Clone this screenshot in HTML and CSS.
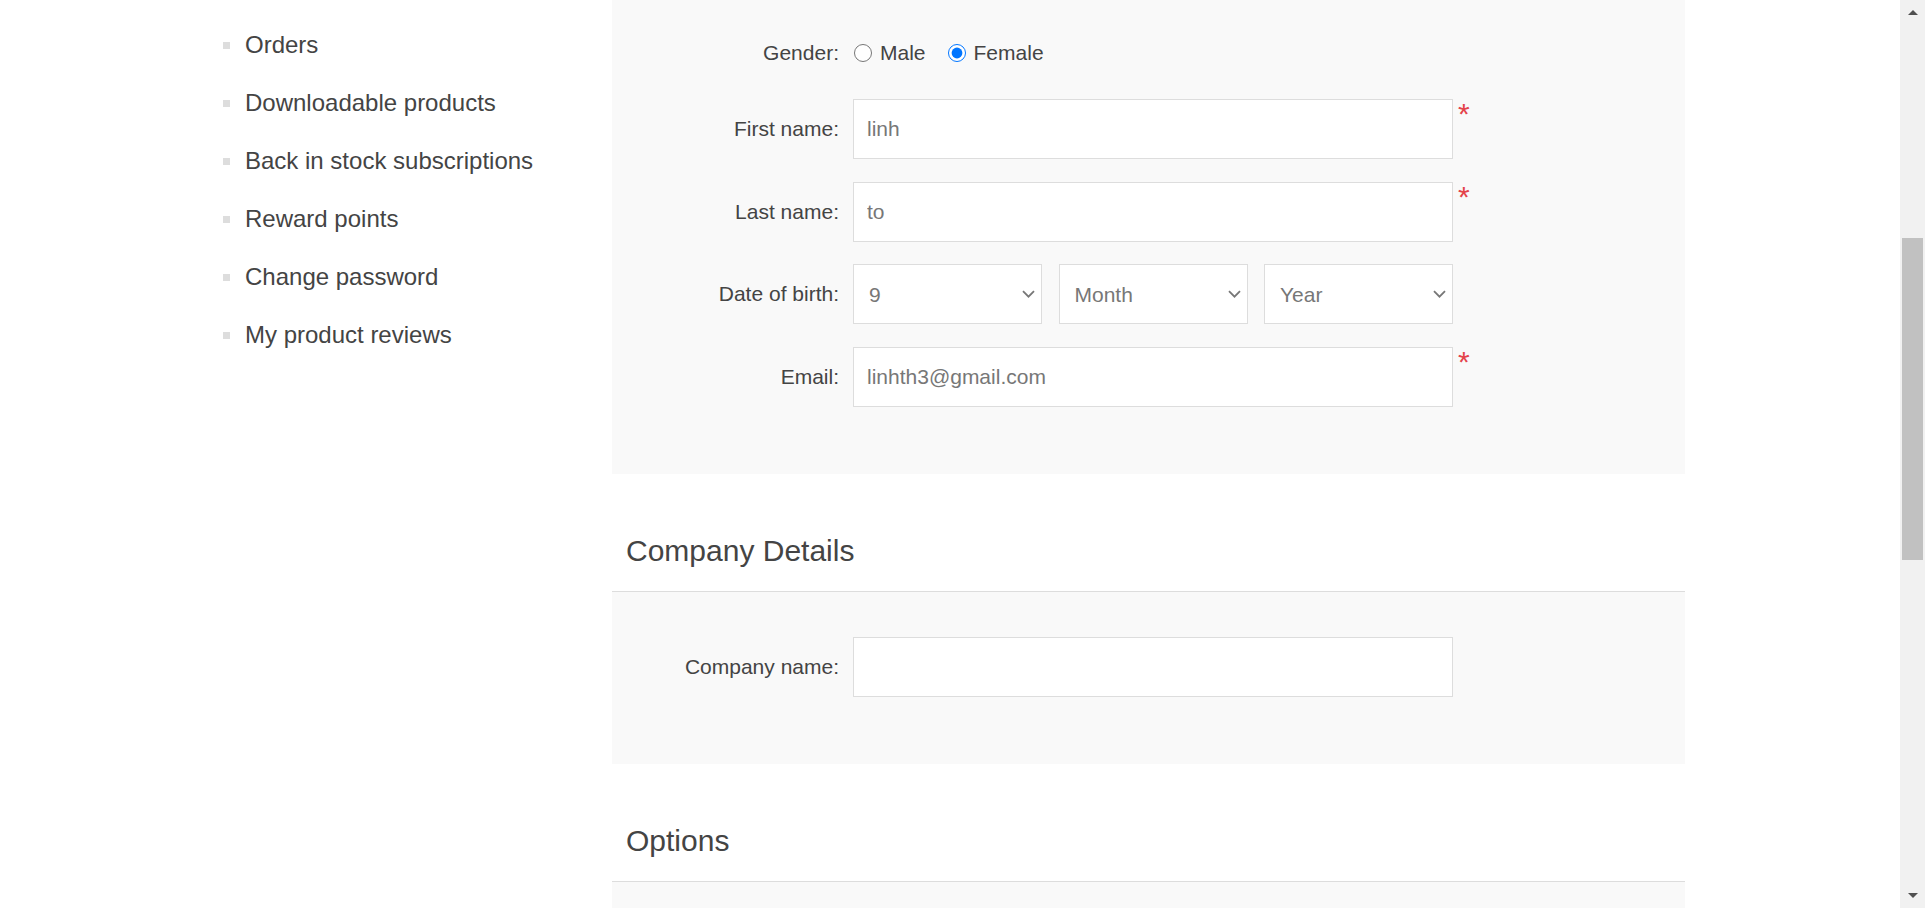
FILE: index.html
```html
<!DOCTYPE html>
<html lang="en">
<head>
<meta charset="utf-8">
<title>Customer info</title>
<link rel="stylesheet" href="styles.css">
</head>
<body>
<div class="viewport">
  <div class="page">
    <div class="container">
      <aside class="side">
        <ul class="nav-list">
          <li><span class="bullet"></span><a href="#">Orders</a></li>
          <li><span class="bullet"></span><a href="#">Downloadable products</a></li>
          <li><span class="bullet"></span><a href="#">Back in stock subscriptions</a></li>
          <li><span class="bullet"></span><a href="#">Reward points</a></li>
          <li><span class="bullet"></span><a href="#">Change password</a></li>
          <li><span class="bullet"></span><a href="#">My product reviews</a></li>
        </ul>
      </aside>
      <main class="main">
        <div class="panel panel-first">
          <div class="row gender-row">
            <label class="lbl">Gender:</label>
            <div class="radios">
              <label class="radio-opt"><input class="radio" type="radio" name="g">Male</label>
              <label class="radio-opt"><input class="radio" type="radio" name="g" checked>Female</label>
            </div>
          </div>
          <div class="row">
            <label class="lbl">First name:</label>
            <input class="field" type="text" value="linh">
            <span class="req">*</span>
          </div>
          <div class="row">
            <label class="lbl">Last name:</label>
            <input class="field" type="text" value="to">
            <span class="req">*</span>
          </div>
          <div class="row">
            <label class="lbl">Date of birth:</label>
            <div class="dob">
              <div class="select-wrap">
                <select class="sel"><option>9</option></select>
                <svg class="chev" width="13" height="8" viewBox="0 0 13 8"><path d="M1 1.2l5.5 5.5 5.5-5.5" fill="none" stroke="#777" stroke-width="1.8"/></svg>
              </div>
              <div class="select-wrap">
                <select class="sel"><option>Month</option></select>
                <svg class="chev" width="13" height="8" viewBox="0 0 13 8"><path d="M1 1.2l5.5 5.5 5.5-5.5" fill="none" stroke="#777" stroke-width="1.8"/></svg>
              </div>
              <div class="select-wrap">
                <select class="sel"><option>Year</option></select>
                <svg class="chev" width="13" height="8" viewBox="0 0 13 8"><path d="M1 1.2l5.5 5.5 5.5-5.5" fill="none" stroke="#777" stroke-width="1.8"/></svg>
              </div>
            </div>
          </div>
          <div class="row">
            <label class="lbl">Email:</label>
            <input class="field" type="text" value="linhth3@gmail.com">
            <span class="req">*</span>
          </div>
        </div>

        <h2 class="title">Company Details</h2>
        <div class="panel">
          <div class="row">
            <label class="lbl">Company name:</label>
            <input class="field" type="text" value="">
          </div>
        </div>

        <h2 class="title">Options</h2>
        <div class="panel panel-tall"></div>
      </main>
    </div>
  </div>
  <div class="scrollbar">
    <div class="sb-btn"><span class="arrow-up"></span></div>
    <div class="sb-thumb"></div>
    <div class="sb-fill"></div>
    <div class="sb-btn"><span class="arrow-down"></span></div>
  </div>
</div>
</body>
</html>
```

FILE: styles.css
```css
html, body {
  margin: 0;
  padding: 0;
}

body {
  font-family: "Liberation Sans", Arial, sans-serif;
  color: #444;
  background: #fff;
}

.viewport {
  display: flex;
  height: 908px;
  overflow: hidden;
}

.page {
  flex: 1;
  min-width: 0;
  overflow: hidden;
}

.container {
  width: 1470px;
  margin: 0 auto;
  display: flex;
  justify-content: space-between;
}

/* sidebar */
.side {
  width: 367px;
  padding-top: 16px;
}

.nav-list {
  list-style: none;
  margin: 0;
  padding: 0;
}

.nav-list li {
  display: flex;
  align-items: center;
  height: 58px;
  font-size: 24px;
}

.nav-list a {
  color: #444;
  text-decoration: none;
}

.bullet {
  flex: none;
  width: 7px;
  height: 7px;
  background: #ddd;
  margin-left: 8px;
  margin-right: 15px;
}

/* main */
.main {
  width: 1073px;
}

.panel {
  background: #f9f9f9;
  padding: 45px 0 67px;
}

.panel-first {
  padding-top: 37px;
}

.panel-tall {
  padding: 0;
  height: 200px;
}

.row {
  display: flex;
  align-items: center;
  margin-bottom: 22.67px;
}

.row:last-child {
  margin-bottom: 0;
}

.gender-row {
  height: 31px;
  margin-bottom: 31px;
}

.lbl {
  flex: none;
  width: 227px;
  margin-right: 14px;
  text-align: right;
  font-size: 21px;
  color: #444;
}

.radios {
  display: flex;
  align-items: center;
  padding-left: 1px;
}

.radio-opt {
  display: flex;
  align-items: center;
  font-size: 21px;
  color: #444;
}

.radio-opt + .radio-opt {
  margin-left: 22px;
}

.radio {
  width: 18px;
  height: 18px;
  margin: 0 8px 0 0;
}

.field {
  flex: none;
  box-sizing: border-box;
  width: 600px;
  height: 60px;
  border: 1px solid #ddd;
  background: #fff;
  padding: 0 13px;
  font-family: "Liberation Sans", Arial, sans-serif;
  font-size: 21px;
  color: #777;
  outline: none;
}

.req {
  align-self: flex-start;
  font-size: 30px;
  line-height: 30px;
  color: #e4434b;
  margin-left: 5px;
}

.dob {
  flex: none;
  width: 600px;
  display: flex;
  gap: 16.5px;
}

.select-wrap {
  position: relative;
  flex: 1;
}

.sel {
  -webkit-appearance: none;
  appearance: none;
  box-sizing: border-box;
  width: 100%;
  height: 60px;
  border: 1px solid #ddd;
  border-radius: 0;
  background: #fff;
  padding: 0 30px 0 15px;
  font-family: "Liberation Sans", Arial, sans-serif;
  font-size: 21px;
  color: #777;
  outline: none;
}

.chev {
  position: absolute;
  right: 7px;
  top: 50%;
  margin-top: -4px;
  pointer-events: none;
}

.title {
  margin: 0;
  padding: 60px 14px 23px;
  font-size: 30px;
  line-height: 34px;
  font-weight: normal;
  color: #444;
  border-bottom: 1px solid #ddd;
}

/* fake scrollbar */
.scrollbar {
  flex: none;
  width: 25px;
  height: 908px;
  background: #f1f1f1;
  display: flex;
  flex-direction: column;
  align-items: center;
}

.sb-btn {
  flex: none;
  width: 25px;
  height: 25px;
  display: flex;
  align-items: center;
  justify-content: center;
}

.arrow-up {
  width: 0;
  height: 0;
  border-left: 5px solid transparent;
  border-right: 5px solid transparent;
  border-bottom: 5px solid #505050;
}

.arrow-down {
  width: 0;
  height: 0;
  border-left: 5px solid transparent;
  border-right: 5px solid transparent;
  border-top: 5px solid #505050;
}

.sb-thumb {
  flex: none;
  width: 21px;
  height: 322px;
  margin-top: 213px;
  background: #c1c1c1;
}

.sb-fill {
  flex: 1;
}
```
